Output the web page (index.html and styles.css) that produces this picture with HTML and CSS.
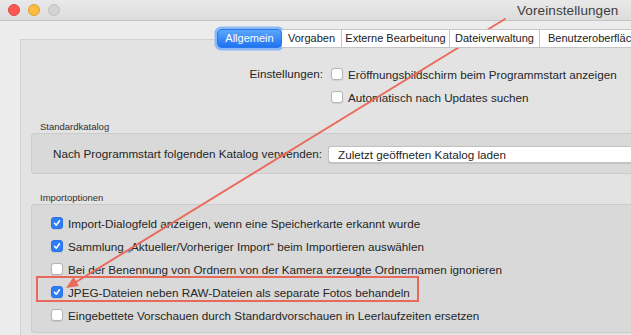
FILE: index.html
```html
<!DOCTYPE html>
<html lang="de">
<head>
<meta charset="utf-8">
<title>Voreinstellungen</title>
<link rel="stylesheet" href="styles.css">
</head>
<body>
<div class="window">
  <div class="titlebar">
    <span class="light red"></span>
    <span class="light yellow"></span>
    <span class="light grey"></span>
    <span class="title">Voreinstellungen</span>
  </div>
  <div class="main">
    <div class="tabs">
      <div class="tab tab-allg active">Allgemein</div>
      <div class="tab tab-vorg">Vorgaben</div>
      <div class="tab tab-ext">Externe Bearbeitung</div>
      <div class="tab tab-datei">Dateiverwaltung</div>
      <div class="tab tab-ui">Benutzeroberfläche</div>
    </div>
    <div class="panel">
      <div class="settings">
        <div class="label">Einstellungen:</div>
        <div class="opt"><span class="cb"></span><span>Eröffnungsbildschirm beim Programmstart anzeigen</span></div>
        <div></div>
        <div class="opt"><span class="cb"></span><span>Automatisch nach Updates suchen</span></div>
      </div>

      <div class="section-label first">Standardkatalog</div>
      <div class="group catalog">
        <div class="label">Nach Programmstart folgenden Katalog verwenden:</div>
        <div class="popup">Zuletzt geöffneten Katalog laden</div>
      </div>

      <div class="section-label second">Importoptionen</div>
      <div class="group imports">
        <div class="opt"><span class="cb on"><svg viewBox="0 0 12 12"><path d="M3 6.3 L5.1 8.6 L9 3.4"/></svg></span><span>Import-Dialogfeld anzeigen, wenn eine Speicherkarte erkannt wurde</span></div>
        <div class="opt"><span class="cb on"><svg viewBox="0 0 12 12"><path d="M3 6.3 L5.1 8.6 L9 3.4"/></svg></span><span>Sammlung „Aktueller/Vorheriger Import“ beim Importieren auswählen</span></div>
        <div class="opt"><span class="cb"></span><span>Bei der Benennung von Ordnern von der Kamera erzeugte Ordnernamen ignorieren</span></div>
        <div class="opt"><span class="cb on"><svg viewBox="0 0 12 12"><path d="M3 6.3 L5.1 8.6 L9 3.4"/></svg></span><span>JPEG-Dateien neben RAW-Dateien als separate Fotos behandeln</span></div>
        <div class="opt"><span class="cb"></span><span>Eingebettete Vorschauen durch Standardvorschauen in Leerlaufzeiten ersetzen</span></div>
      </div>
    </div>
  </div>
  <svg class="annotation" width="631" height="335" viewBox="0 0 631 335">
    <line x1="505" y1="19" x2="76" y2="282" stroke="#ea6b5c" stroke-width="2" stroke-linecap="round"/>
    <polygon points="66,288 79,286 73.5,277" fill="#ea6b5c"/>
    <rect x="37" y="277" width="381" height="24" fill="none" stroke="#e8685a" stroke-width="2"/>
  </svg>
</div>
</body>
</html>
```

FILE: styles.css
```css
* { box-sizing: border-box; }
html, body {
  margin: 0;
  padding: 0;
  width: 631px;
  height: 335px;
  overflow: hidden;
  background: #ececec;
  font-family: "Liberation Sans", Arial, sans-serif;
  color: #262626;
}
.window {
  position: relative;
  width: 631px;
  height: 335px;
  overflow: hidden;
}
.titlebar {
  height: 21px;
  display: flex;
  align-items: center;
  padding-left: 8px;
  gap: 8px;
  background: linear-gradient(#e9e9e9, #dcdcdc);
  border-bottom: 1px solid #c4c4c4;
}
.light {
  width: 12px;
  height: 12px;
  border-radius: 50%;
  flex: none;
}
.red { background: #fc5753; border: 1px solid #df4744; }
.yellow { background: #fdbc40; border: 1px solid #de9f34; }
.grey { background: #d3d3d3; border: 1px solid #c1c1c1; }
.title {
  margin-left: 449px;
  font-size: 13.5px;
  color: #3d3d3d;
  letter-spacing: 0.1px;
}
.main {
  padding-left: 20px;
}
.tabs {
  display: flex;
  margin-top: 8px;
  margin-left: 197px;
  margin-bottom: -9px;
  position: relative;
  z-index: 1;
  height: 19px;
  white-space: nowrap;
}
.tab {
  flex: none;
  height: 19px;
  line-height: 17px;
  font-size: 11px;
  text-align: center;
  background: #fff;
  border: 1px solid #c6c6c6;
  border-left: none;
  color: #222;
}
.tab-allg { width: 65px; }
.tab-vorg { width: 60px; }
.tab-ext { width: 108px; }
.tab-datei { width: 90px; }
.tab-ui { width: 110px; text-align: left; padding-left: 8px; }
.tab.active {
  color: #fff;
  background: linear-gradient(#5aa6fb, #1f73f0);
  border: 1px solid #2a78ee;
  border-radius: 4px;
  box-shadow: 0 0 0 2.5px #8ab9f5;
}
.panel {
  background: #e3e3e3;
  border-top: 1px solid #d2d2d2;
  border-left: 1px solid #d2d2d2;
  height: 296px;
  padding-top: 25px;
}
.settings {
  display: grid;
  grid-template-columns: 302px auto;
  column-gap: 8px;
  row-gap: 5px;
}
.label {
  text-align: right;
  font-size: 11.7px;
  line-height: 18px;
  white-space: nowrap;
}
.opt {
  display: flex;
  align-items: center;
  gap: 5px;
  height: 18px;
  font-size: 11.7px;
  white-space: nowrap;
}
.cb {
  width: 12px;
  height: 12px;
  flex: none;
  border-radius: 3px;
  background: #fff;
  border: 1px solid #b5b5b5;
  box-shadow: 0 0.5px 1px rgba(0,0,0,0.08);
  display: flex;
}
.cb.on {
  background: #2e7cf6;
  border-color: #2a72e6;
}
.cb svg {
  width: 10px;
  height: 10px;
  fill: none;
  stroke: #fff;
  stroke-width: 1.9;
  stroke-linecap: round;
  stroke-linejoin: round;
}
.section-label {
  font-size: 9.5px;
  line-height: 12px;
  color: #303030;
  margin-left: 19px;
}
.section-label.first { margin-top: 15px; }
.section-label.second { margin-top: 18px; }
.group {
  margin-left: 10px;
  background: #d9d9d9;
  border: 1px solid #cbcbcb;
  border-right: none;
  border-radius: 4px 0 0 4px;
}
.catalog {
  display: grid;
  grid-template-columns: 290px auto;
  column-gap: 6px;
  align-items: center;
  padding: 11px 0 10px 0;
}
.popup {
  height: 17px;
  line-height: 16px;
  font-size: 11.7px;
  background: #fff;
  border: 1px solid #c2c2c2;
  border-right: none;
  border-radius: 3px 0 0 3px;
  padding-left: 9px;
  box-shadow: 0 0.5px 1px rgba(0,0,0,0.1);
  white-space: nowrap;
}
.imports {
  display: flex;
  flex-direction: column;
  gap: 5px;
  padding: 9px 0 8px 19px;
}
.annotation {
  position: absolute;
  top: 0;
  left: 0;
  pointer-events: none;
}
```
